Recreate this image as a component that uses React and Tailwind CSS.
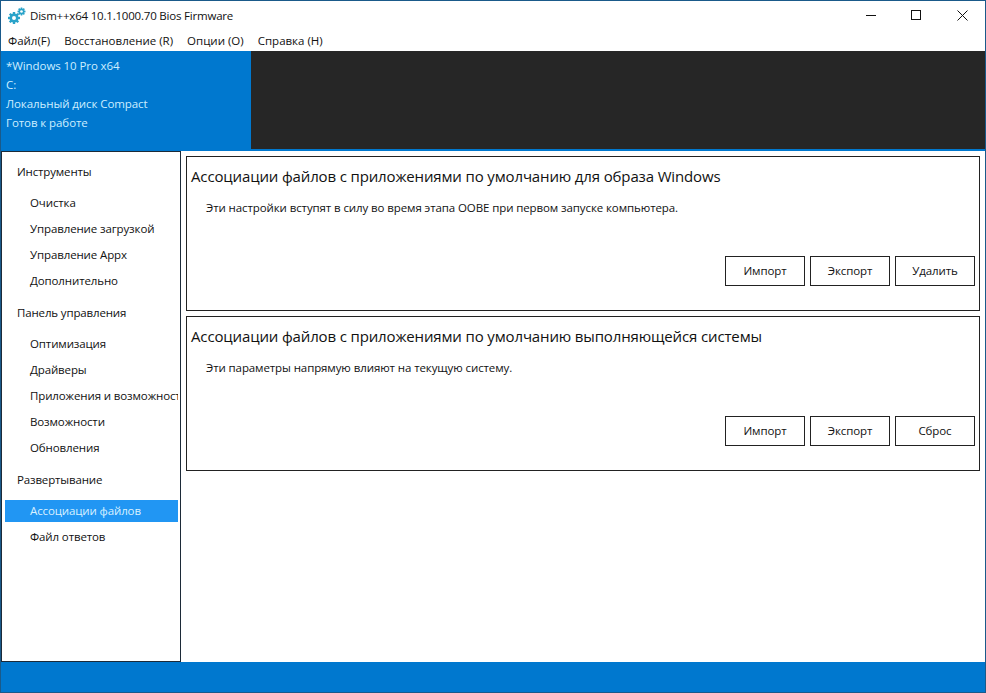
import React from "react";

const Gear = ({ size, x, y }) => {
  const teeth = [0, 45, 90, 135, 180, 225, 270, 315];
  return (
    <g transform={`translate(${x} ${y})`}>
      {teeth.map((a) => (
        <rect key={a} x={-size * 0.2} y={-size} width={size * 0.4} height={size * 0.5} fill="#2aa3c9" transform={`rotate(${a})`} />
      ))}
      <circle r={size * 0.75} fill="#2aa3c9" />
      <circle r={size * 0.33} fill="#fff" />
    </g>
  );
};

const Panel = ({ title, desc, last, className }) => (
  <section className={`border border-[#222] flex flex-col pl-[4px] pr-[4px] ${className}`}>
    <h2 className="text-[15px] leading-[20px] mt-[9px] text-[#111] tracking-[-0.14px]">{title}</h2>
    <p className="text-[11.5px] leading-[16px] mt-[14px] pl-[15px] text-[#111] tracking-[-0.1px]">{desc}</p>
    <div className="mt-auto mb-[24px] flex justify-end gap-[5px]">
      {["Импорт", "Экспорт", last].map((b) => (
        <button key={b} className="w-[80px] h-[30px] border border-[#222] bg-white text-[11.5px] text-[#111] tracking-[-0.1px]">{b}</button>
      ))}
    </div>
  </section>
);

const Head = ({ children }) => (
  <div className="h-[26px] leading-[26px] pl-[12px] text-[11.5px] text-[#111] tracking-[-0.15px]">{children}</div>
);
const Item = ({ children, active }) => (
  <div className={`h-[22px] leading-[22px] pl-[25px] text-[11.5px] tracking-[-0.12px] whitespace-nowrap overflow-hidden ${active ? "bg-[#2196f3] text-[#d9f1ff]" : "text-[#111]"}`}>{children}</div>
);
const Items = ({ children }) => <div className="flex flex-col gap-[4px] mt-[7px] mb-[8px]">{children}</div>;

export default function App() {
  return (
    <div className="w-[986px] h-[693px] bg-white flex flex-col overflow-hidden border border-[#1a5a8a]" style={{ fontFamily: '"Open Sans", "Noto Sans", sans-serif' }}>
      <header className="h-[29px] flex items-center shrink-0">
        <svg width="18" height="18" viewBox="0 0 18 18" className="ml-[7px]">
          <Gear size={6} x={6} y={11} />
          <Gear size={4} x={13.5} y={4.5} />
        </svg>
        <span className="ml-[4px] text-[11.5px] text-[#111] tracking-[-0.2px]">Dism++x64 10.1.1000.70 Bios Firmware</span>
        <div className="ml-auto flex items-center">
          <svg width="46" height="29" viewBox="0 0 46 29"><path d="M19 14.5H29" stroke="#111" strokeWidth="1" /></svg>
          <svg width="46" height="29" viewBox="0 0 46 29"><rect x="18.5" y="9.5" width="9" height="9" fill="none" stroke="#111" strokeWidth="1" /></svg>
          <svg width="46" height="29" viewBox="0 0 46 29"><path d="M18.5 9.5L28.5 19.5M28.5 9.5L18.5 19.5" stroke="#111" strokeWidth="1" /></svg>
        </div>
      </header>
      <nav className="h-[21px] flex items-center pl-[7px] pt-[1px] gap-[14px] text-[11.5px] text-[#111] tracking-[0px] shrink-0">
        <span>Файл(F)</span>
        <span>Восстановление (R)</span>
        <span>Опции (O)</span>
        <span>Справка (H)</span>
      </nav>
      <div className="h-[98px] flex shrink-0 bg-[#262626]">
        <div className="w-[250px] bg-[#0078cf] pl-[5px] pt-[5px] text-[11.5px] leading-[19px] text-[#cdeeff] tracking-[-0.08px]">
          <div>*Windows 10 Pro x64</div>
          <div>C:</div>
          <div>Локальный диск Compact</div>
          <div>Готов к работе</div>
        </div>
      </div>
      <div className="h-[2px] bg-[#0078cf] shrink-0" />
      <main className="flex-1 flex min-h-0">
        <aside className="w-[180px] border border-[#1c2a38] pt-[7px] pl-[3px] pr-[2px] flex flex-col">
          <Head>Инструменты</Head>
          <Items><Item>Очистка</Item><Item>Управление загрузкой</Item><Item>Управление Appx</Item><Item>Дополнительно</Item></Items>
          <Head>Панель управления</Head>
          <Items><Item>Оптимизация</Item><Item>Драйверы</Item><Item>Приложения и возможности</Item><Item>Возможности</Item><Item>Обновления</Item></Items>
          <Head>Развертывание</Head>
          <Items><Item active>Ассоциации файлов</Item><Item>Файл ответов</Item></Items>
        </aside>
        <div className="ml-[5px] w-[794px] pt-[5px] flex flex-col gap-[5px]">
          <Panel className="h-[155px]" title="Ассоциации файлов с приложениями по умолчанию для образа Windows" desc="Эти настройки вступят в силу во время этапа OOBE при первом запуске компьютера." last="Удалить" />
          <Panel className="h-[155px]" title="Ассоциации файлов с приложениями по умолчанию выполняющейся системы" desc="Эти параметры напрямую влияют на текущую систему." last="Сброс" />
        </div>
      </main>
      <footer className="h-[30px] bg-[#0078cf] shrink-0" />
    </div>
  );
}
